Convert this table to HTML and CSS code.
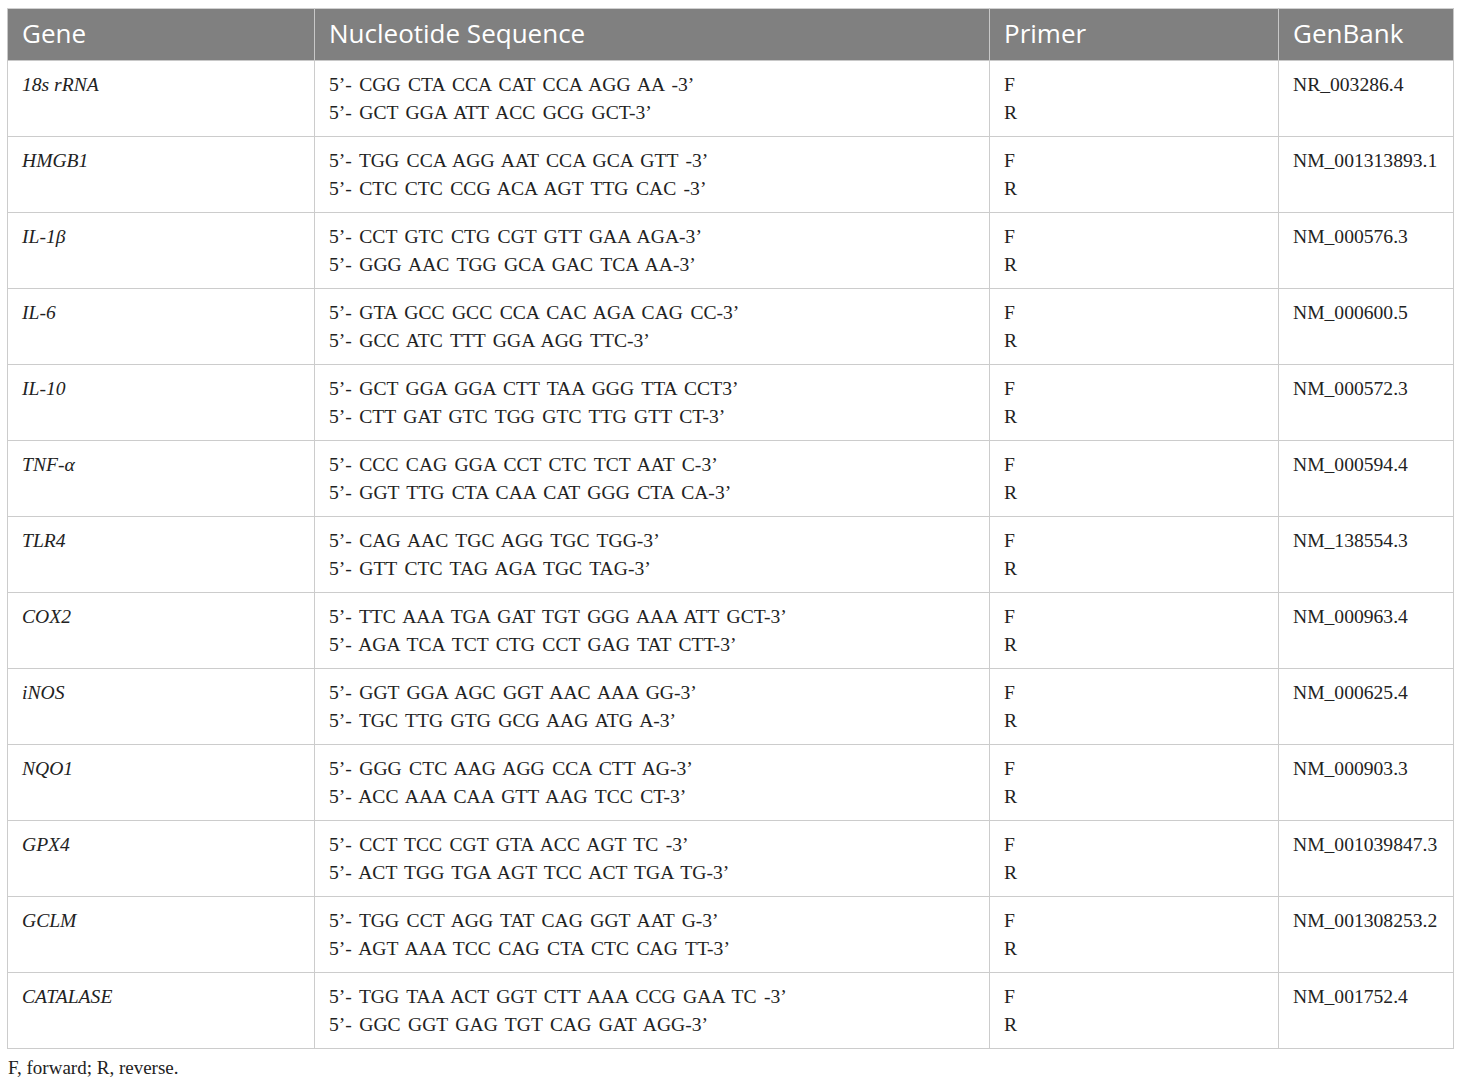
FILE: index.html
```html
<!DOCTYPE html>
<html>
<head>
<meta charset="utf-8">
<link rel="stylesheet" href="styles.css">
</head>
<body>
<div class="wrap">
<table class="tbl">
<colgroup>
<col class="c1"><col class="c2"><col class="c3"><col class="c4">
</colgroup>
<thead>
<tr><th>Gene</th><th>Nucleotide Sequence</th><th>Primer</th><th>GenBank</th></tr>
</thead>
<tbody>
<tr><td class="g">18s rRNA</td><td class="s">5’- CGG CTA CCA CAT CCA AGG AA -3’<br>5’- GCT GGA ATT ACC GCG GCT-3’</td><td>F<br>R</td><td>NR_003286.4</td></tr>
<tr><td class="g">HMGB1</td><td class="s">5’- TGG CCA AGG AAT CCA GCA GTT -3’<br>5’- CTC CTC CCG ACA AGT TTG CAC -3’</td><td>F<br>R</td><td>NM_001313893.1</td></tr>
<tr><td class="g">IL-1β</td><td class="s">5’- CCT GTC CTG CGT GTT GAA AGA-3’<br>5’- GGG AAC TGG GCA GAC TCA AA-3’</td><td>F<br>R</td><td>NM_000576.3</td></tr>
<tr><td class="g">IL-6</td><td class="s">5’- GTA GCC GCC CCA CAC AGA CAG CC-3’<br>5’- GCC ATC TTT GGA AGG TTC-3’</td><td>F<br>R</td><td>NM_000600.5</td></tr>
<tr><td class="g">IL-10</td><td class="s">5’- GCT GGA GGA CTT TAA GGG TTA CCT3’<br>5’- CTT GAT GTC TGG GTC TTG GTT CT-3’</td><td>F<br>R</td><td>NM_000572.3</td></tr>
<tr><td class="g">TNF-α</td><td class="s">5’- CCC CAG GGA CCT CTC TCT AAT C-3’<br>5’- GGT TTG CTA CAA CAT GGG CTA CA-3’</td><td>F<br>R</td><td>NM_000594.4</td></tr>
<tr><td class="g">TLR4</td><td class="s">5’- CAG AAC TGC AGG TGC TGG-3’<br>5’- GTT CTC TAG AGA TGC TAG-3’</td><td>F<br>R</td><td>NM_138554.3</td></tr>
<tr><td class="g">COX2</td><td class="s">5’- TTC AAA TGA GAT TGT GGG AAA ATT GCT-3’<br>5’- AGA TCA TCT CTG CCT GAG TAT CTT-3’</td><td>F<br>R</td><td>NM_000963.4</td></tr>
<tr><td class="g">iNOS</td><td class="s">5’- GGT GGA AGC GGT AAC AAA GG-3’<br>5’- TGC TTG GTG GCG AAG ATG A-3’</td><td>F<br>R</td><td>NM_000625.4</td></tr>
<tr><td class="g">NQO1</td><td class="s">5’- GGG CTC AAG AGG CCA CTT AG-3’<br>5’- ACC AAA CAA GTT AAG TCC CT-3’</td><td>F<br>R</td><td>NM_000903.3</td></tr>
<tr><td class="g">GPX4</td><td class="s">5’- CCT TCC CGT GTA ACC AGT TC -3’<br>5’- ACT TGG TGA AGT TCC ACT TGA TG-3’</td><td>F<br>R</td><td>NM_001039847.3</td></tr>
<tr><td class="g">GCLM</td><td class="s">5’- TGG CCT AGG TAT CAG GGT AAT G-3’<br>5’- AGT AAA TCC CAG CTA CTC CAG TT-3’</td><td>F<br>R</td><td>NM_001308253.2</td></tr>
<tr><td class="g">CATALASE</td><td class="s">5’- TGG TAA ACT GGT CTT AAA CCG GAA TC -3’<br>5’- GGC GGT GAG TGT CAG GAT AGG-3’</td><td>F<br>R</td><td>NM_001752.4</td></tr>
</tbody>
</table>
<p class="note">F, forward; R, reverse.</p>
</div>
</body>
</html>
```
FILE: styles.css
```css
html, body {
  margin: 0;
  padding: 0;
  background: #ffffff;
}
.wrap {
  padding: 8px 7px 0 7px;
}
.tbl {
  width: 1446px;
  border-collapse: collapse;
  table-layout: fixed;
}
.c1 { width: 307px; }
.c2 { width: 675px; }
.c3 { width: 289px; }
.c4 { width: 175px; }
.tbl th {
  background: #808080;
  color: #ffffff;
  font-family: "Open Sans", sans-serif;
  font-weight: 400;
  font-size: 26px;
  line-height: 30px;
  text-align: left;
  height: 52px;
  padding: 0 14px 4px 14px;
  box-sizing: border-box;
  border: 1px solid #c8c8c8;
  border-top: 1px solid #d0d0d0;
}
.tbl td {
  font-family: "Liberation Serif", serif;
  font-size: 19.6px;
  line-height: 28px;
  color: #222222;
  vertical-align: top;
  padding: 10px 14px 9px 14px;
  height: 75px;
  box-sizing: border-box;
  border: 1px solid #cccccc;
  white-space: nowrap;
}
.tbl td.s {
  word-spacing: 2.5px;
}
.tbl td.g {
  font-style: italic;
}
.note {
  margin: 8px 0 0 1px;
  font-family: "Liberation Serif", serif;
  font-size: 19px;
  color: #222222;
}
```
